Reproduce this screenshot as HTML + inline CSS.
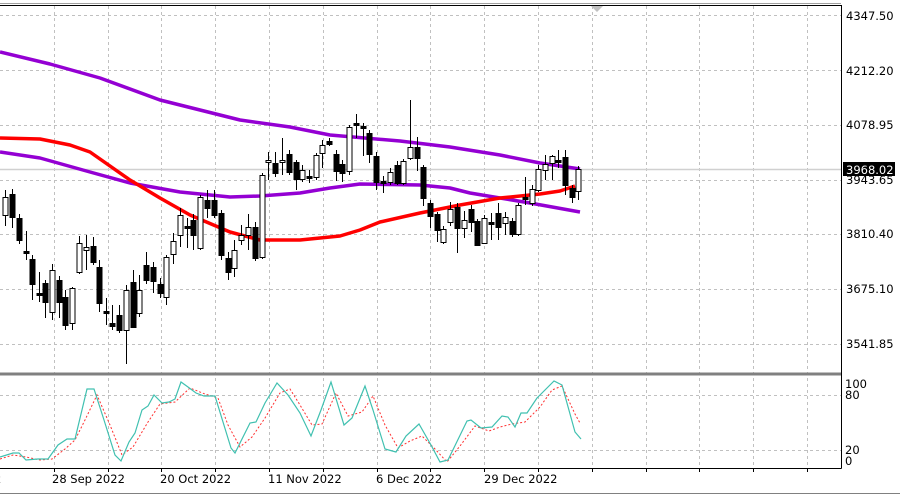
<!DOCTYPE html>
<html><head><meta charset="utf-8"><style>
html,body{margin:0;padding:0;background:#fff;width:900px;height:495px;overflow:hidden}
svg{display:block;font-family:"DejaVu Sans","Liberation Sans",sans-serif}
</style></head><body>
<svg id="s" width="900" height="495" xmlns="http://www.w3.org/2000/svg">
<rect width="900" height="495" fill="#fff"/>
<g id="grid" stroke="#c0c0c0" stroke-dasharray="3,3" stroke-width="1"></g>
<line x1="0" y1="169.5" x2="841" y2="169.5" stroke="#d0d0d0" stroke-width="1.5"/>
<polyline fill="none" stroke="#9400d3" stroke-width="3.5" stroke-linejoin="round" points="0,52 50,64 100,78 160,100 240,120 290,127 330,135 400,141 450,147 500,155 540,163 580,169"/>
<polyline fill="none" stroke="#9400d3" stroke-width="3.5" stroke-linejoin="round" points="0,152 40,158 90,172 130,183 180,192 230,197 260,196 300,193 330,188 360,184 420,185 450,188 470,193 500,198 530,203 580,212"/>
<polyline fill="none" stroke="#ff0000" stroke-width="3.5" stroke-linejoin="round" points="0,138 40,139 70,145 90,152 130,180 160,198 190,215 230,232 260,240 300,240 340,236 360,230 380,222 420,213 460,205 500,198 540,194 560,191 575,186"/>
<g id="c"></g>
<g id="ind"></g>
<!-- frame -->
<line x1="0" y1="3.5" x2="841" y2="3.5" stroke="#a0a0a0"/>
<line x1="0" y1="5.5" x2="841.5" y2="5.5" stroke="#000"/>
<line x1="841.5" y1="5" x2="841.5" y2="468.5" stroke="#000"/>
<line x1="0" y1="374" x2="841" y2="374" stroke="#808080" stroke-width="3"/>
<line x1="0" y1="468.5" x2="841.5" y2="468.5" stroke="#000"/>
<line x1="0" y1="493.5" x2="900" y2="493.5" stroke="#808080"/>
<polygon points="591,6 603,6 597,12" fill="#c0c0c0"/>
<g font-size="11.5" fill="#000">
<text x="846" y="20">4347.50</text>
<text x="846" y="75">4212.20</text>
<text x="846" y="129">4078.95</text>
<text x="846" y="184">3943.65</text>
<text x="846" y="238">3810.40</text>
<text x="846" y="293">3675.10</text>
<text x="846" y="348">3541.85</text>
<rect x="843" y="162" width="52" height="14" fill="#000"/>
<text x="846" y="174" fill="#fff">3968.02</text>
<text x="845" y="388">100</text>
<text x="845" y="399">80</text>
<text x="845" y="454">20</text>
<text x="845" y="465">0</text>
<text x="-6" y="483">2</text>
<text x="52" y="483">28 Sep 2022</text>
<text x="160" y="483">20 Oct 2022</text>
<text x="268" y="483">11 Nov 2022</text>
<text x="376" y="483">6 Dec 2022</text>
<text x="484" y="483">29 Dec 2022</text>
</g>
<g stroke="#000" id="ticks"></g>
</svg>
<script>
var NS="http://www.w3.org/2000/svg";
function el(p,t,a){var e=document.createElementNS(NS,t);for(var k in a)e.setAttribute(k,a[k]);p.appendChild(e);return e;}
var g=document.getElementById('grid');
for(var k=1;k<=15;k++){var x=Math.round(53.8*k)+0.5;if(x<841)el(g,'line',{x1:x,y1:6,x2:x,y2:468});}
[15,70,125,180,234,289,344,395,450].forEach(function(y){el(g,'line',{x1:0,y1:y+0.5,x2:841,y2:y+0.5});});
var tk=document.getElementById('ticks');
for(var k=1;k<=15;k++){var x=Math.round(53.8*k)+0.5;if(x<841)el(tk,'line',{x1:x,y1:468,x2:x,y2:472});}
// x, top, bottom, high, low, bear(1)
var C=[[5,197,215,190,226,0],[12,194,217,189,228,1],[19,218,240,214,244,1],[26,251,253,231,260,1],[32,259,284,255,300,1],[39,293,295,272,302,1],[45,283,302,280,318,1],[52,270,312,264,320,0],[59,280,302,276,318,1],[65,297,325,290,330,1],[72,288,323,287,330,0],[79,243,272,236,274,0],[86,247,250,235,270,0],[93,246,262,237,265,1],[99,267,303,260,312,1],[106,311,313,298,325,1],[112,323,326,305,330,1],[119,315,330,305,333,1],[126,290,330,285,364,0],[133,282,327,270,327,1],[139,290,313,275,317,0],[146,265,280,252,284,1],[153,267,281,262,293,1],[160,284,293,278,298,1],[166,257,297,255,305,0],[173,241,254,233,264,0],[180,215,235,208,247,0],[187,226,228,218,248,1],[193,220,235,214,250,1],[200,197,248,195,250,0],[207,200,208,190,218,1],[214,200,215,190,218,1],[221,213,255,210,260,1],[228,258,272,252,280,1],[234,250,268,240,277,0],[241,235,240,225,245,0],[248,227,235,214,250,0],[255,227,258,222,261,1],[262,175,257,173,259,0],[268,160,162,152,180,0],[275,163,173,152,177,1],[282,160,162,138,175,0],[289,154,172,150,175,1],[296,162,179,160,190,1],[302,170,179,165,182,0],[309,176,178,170,183,1],[316,155,177,153,180,0],[322,145,153,140,168,0],[329,141,144,138,146,1],[336,154,171,150,181,1],[342,164,173,160,182,1],[349,127,171,125,175,0],[356,123,125,114,138,1],[363,126,128,123,156,1],[369,133,154,130,163,1],[376,156,182,152,190,1],[383,181,183,176,193,1],[390,172,182,168,185,0],[397,165,183,161,185,1],[403,161,183,159,185,0],[410,147,158,100,160,0],[417,147,158,137,171,1],[423,167,198,165,206,1],[430,203,216,200,228,1],[437,214,230,212,242,1],[443,229,242,226,244,0],[450,209,222,202,226,0],[457,207,228,203,253,1],[464,220,228,211,238,0],[471,209,222,205,232,1],[477,221,245,219,246,1],[484,218,243,215,244,0],[491,222,224,213,240,1],[498,213,227,203,240,1],[505,217,223,212,235,0],[512,221,234,218,237,1],[518,205,234,203,236,0],[525,197,199,177,205,1],[532,189,203,185,206,0],[538,169,190,165,192,0],[545,164,170,155,180,0],[552,156,163,155,180,0],[558,160,162,150,168,1],[565,157,185,150,195,1],[572,188,197,185,203,1],[578,169,191,166,200,0]];
var cg=document.getElementById('c');
C.forEach(function(c){var x=c[0]+0.5;
el(cg,'line',{x1:x,y1:c[3],x2:x,y2:c[4],stroke:'#000'});
var h=Math.max(c[2]-c[1],1);
el(cg,'rect',{x:x-2.5,y:c[1]+0.5,width:5,height:h,fill:c[5]?'#000':'#fff',stroke:'#000','stroke-width':1});});
var T=[[0,457],[13,453],[19,453],[26,460],[38,459],[48,459],[58,445],[67,439],[75,439],[87,389],[94,389],[104,420],[115,455],[121,461],[129,442],[135,433],[142,410],[148,406],[154,395],[162,403],[169,402],[175,399],[181,382],[188,387],[196,393],[204,396],[215,396],[231,448],[235,453],[250,423],[256,422],[265,403],[277,383],[288,395],[300,413],[311,436],[321,410],[331,382],[344,425],[352,418],[365,386],[373,410],[385,449],[396,452],[406,436],[419,424],[431,445],[440,462],[448,460],[467,421],[471,420],[481,428],[492,427],[502,416],[508,417],[515,427],[521,413],[527,413],[537,398],[542,393],[554,381],[562,385],[575,432],[581,439]];
var R=[[0,459],[13,455],[26,457],[40,460],[52,459],[65,449],[75,440],[85,420],[97,395],[110,425],[122,455],[133,447],[148,422],[160,404],[175,402],[190,388],[205,394],[218,398],[228,425],[240,447],[252,437],[265,418],[280,393],[290,389],[300,405],[312,425],[322,424],[336,393],[348,416],[362,412],[373,396],[385,425],[398,448],[410,441],[422,436],[435,449],[447,462],[460,446],[475,426],[489,431],[500,427],[512,424],[525,422],[540,407],[552,390],[562,386],[575,414],[580,423]];
var ig=document.getElementById('ind');
el(ig,'polyline',{points:R.join(' '),fill:'none',stroke:'#ff3030','stroke-dasharray':'2,2','stroke-width':1});
el(ig,'polyline',{points:T.join(' '),fill:'none',stroke:'#40c0b0','stroke-width':1.2});
</script>
</body></html>
